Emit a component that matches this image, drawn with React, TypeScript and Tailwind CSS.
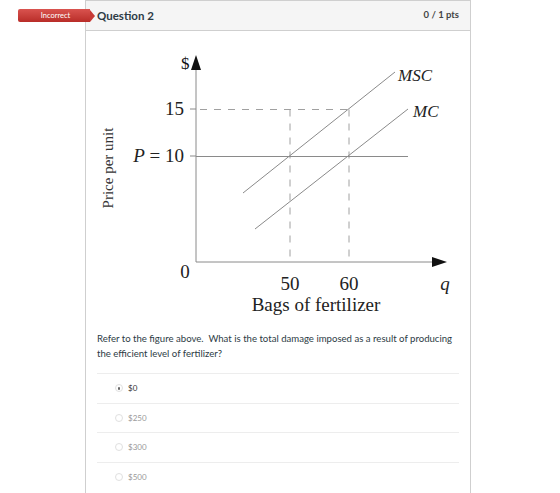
import React from "react"

// Answer choices for the quiz question
const answers = [
  { label: "$0", selected: true },
  { label: "$250", selected: false },
  { label: "$300", selected: false },
  { label: "$500", selected: false },
]

const serif = "'Liberation Serif', 'DejaVu Serif', serif"

// Externality diagram: MC vs MSC with price line at P = 10
function FertilizerChart() {
  const line = "#8a8a8a"
  const dash = "#a0a0a0"
  return (
    <svg width="384" height="290" className="block" style={{ fontFamily: serif }}>
      <g transform="translate(-86,-31)">
        {/* axes */}
        <line x1="196" y1="66" x2="196" y2="262" stroke={line} strokeWidth="1" />
        <line x1="196" y1="262" x2="434" y2="262" stroke={line} strokeWidth="1" />
        <polygon points="196,55 191,70 201,70" fill="#111" />
        <polygon points="447,262 432,257 432,267" fill="#111" />

        {/* ticks */}
        <line x1="190" y1="109" x2="196" y2="109" stroke={line} />
        <line x1="190" y1="156" x2="196" y2="156" stroke={line} />

        {/* dashed guides */}
        <line x1="200" y1="109.5" x2="349" y2="109.5" stroke={dash} strokeDasharray="7 7" />
        <line x1="290" y1="109.5" x2="290" y2="262" stroke={dash} strokeDasharray="7 7" />
        <line x1="349" y1="109.5" x2="349" y2="262" stroke={dash} strokeDasharray="7 7" />

        {/* price line */}
        <line x1="196" y1="156.5" x2="408" y2="156.5" stroke={line} />

        {/* MSC and MC */}
        <line x1="243" y1="193" x2="395" y2="72" stroke={line} />
        <line x1="255" y1="229" x2="408" y2="109" stroke={line} />

        {/* labels */}
        <text x="181" y="69" fontSize="17" fill="#111">$</text>
        <text x="184" y="115" fontSize="19" fill="#222" textAnchor="end">15</text>
        <text x="184" y="162" fontSize="19" fill="#222" textAnchor="end">
          <tspan fontStyle="italic">P</tspan> = 10
        </text>
        <text x="185" y="278" fontSize="19" fill="#222" textAnchor="middle">0</text>
        <text x="290" y="290" fontSize="19" fill="#222" textAnchor="middle">50</text>
        <text x="349" y="290" fontSize="19" fill="#222" textAnchor="middle">60</text>
        <text x="445" y="290" fontSize="19" fill="#222" fontStyle="italic" textAnchor="middle">q</text>
        <text x="316" y="311" fontSize="19" fill="#222" textAnchor="middle">Bags of fertilizer</text>
        <text x="398" y="81" fontSize="17" fill="#222" fontStyle="italic">MSC</text>
        <text x="413" y="117" fontSize="17" fill="#222" fontStyle="italic">MC</text>
        <text
          x="0"
          y="0"
          fontSize="15"
          fill="#333"
          textAnchor="middle"
          transform="translate(113,168) rotate(-90)"
        >
          Price per unit
        </text>
      </g>
    </svg>
  )
}

function RadioDot({ selected }: { selected: boolean }) {
  return (
    <span className="flex h-[8px] w-[8px] items-center justify-center rounded-full border border-[#e0e0e0] bg-white">
      {selected && <span className="h-[2.5px] w-[2.5px] rounded-full bg-[#666]" />}
    </span>
  )
}

export default function App() {
  return (
    <div
      className="relative h-[493px] w-[560px] overflow-hidden bg-white"
      style={{ fontFamily: "Lato, 'Noto Sans', sans-serif" }}
    >
      {/* result badge hanging off the card's left edge */}
      <div className="absolute left-[18px] top-[9px] flex h-[13px] items-center">
        <div className="flex h-[13px] w-[72px] items-center justify-center rounded-l-[2px] bg-gradient-to-b from-[#d9534f] to-[#b92c28] pl-[3px] text-[7.5px] text-white">
          Incorrect
        </div>
        <div className="h-0 w-0 border-y-[6.5px] border-l-[5px] border-y-transparent border-l-[#c73a35]" />
      </div>

      <div className="ml-[85px] h-full w-[386px] border-x border-[#cfcfcf]">
        <div className="flex h-[31px] items-center justify-between border-y border-[#cfcfcf] bg-[#f5f5f5] pl-[11px] pr-[11px]">
          <span className="text-[11.5px] font-bold text-[#2d3b45]">Question 2</span>
          <span className="text-[9.5px] font-bold text-[#444]">0 / 1 pts</span>
        </div>

        <FertilizerChart />

        <div className="px-[11px]">
          <p className="pt-[10px] text-[9.6px] leading-[15px] text-[#2d3b45]">
            Refer to the figure above.&nbsp; What is the total damage imposed as a result of producing
            the efficient level of fertilizer?
          </p>

          <div className="mt-[12px]">
            {answers.map((a) => (
              <div
                key={a.label}
                className="flex h-[29.5px] items-center gap-[5px] border-t border-[#ededed] pl-[18px]"
              >
                <RadioDot selected={a.selected} />
                <span className={`text-[8px] ${a.selected ? "text-[#333]" : "text-[#999]"}`}>
                  {a.label}
                </span>
              </div>
            ))}
          </div>
        </div>
      </div>
    </div>
  )
}
